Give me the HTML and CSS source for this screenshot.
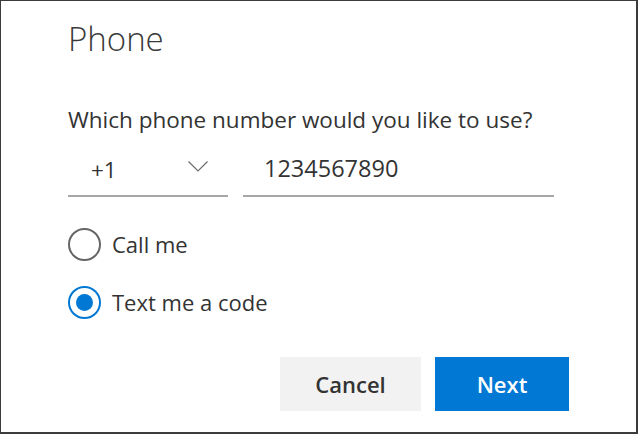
FILE: index.html
```html
<!DOCTYPE html>
<html>
<head>
<meta charset="utf-8">
<link rel="stylesheet" href="styles.css">
</head>
<body>
<div class="dialog">
  <h1 class="title">Phone</h1>
  <p class="question">Which phone number would you like to use?</p>
  <div class="phone-row">
    <div class="select">
      <span class="select-value">+1</span>
      <svg class="chevron" width="20" height="11" viewBox="0 0 20 11"><path d="M0.5 0.5 L10 10 L19.5 0.5" fill="none" stroke="#6b6b6b" stroke-width="1.2"/></svg>
    </div>
    <div class="input">1234567890</div>
  </div>
  <div class="options">
    <label class="option"><span class="radio"></span><span class="option-label">Call me</span></label>
    <label class="option"><span class="radio checked"></span><span class="option-label">Text me a code</span></label>
  </div>
  <div class="actions">
    <button class="btn btn-secondary">Cancel</button>
    <button class="btn btn-primary">Next</button>
  </div>
</div>
</body>
</html>
```
FILE: styles.css
```css
html, body {
  margin: 0;
  padding: 0;
  background: #ffffff;
}
.dialog {
  box-sizing: border-box;
  width: 638px;
  height: 434px;
  border-style: solid;
  border-color: #3b3b3b;
  border-width: 1px 2px 2px 1px;
  padding: 18px 0 0 67px;
  font-family: "Open Sans", "Noto Sans", sans-serif;
  color: #333333;
  display: flex;
  flex-direction: column;
}
.title {
  margin: 0;
  font-size: 33px;
  font-weight: 300;
  line-height: 40px;
  color: #3a3a3a;
}
.question {
  margin: 47px 0 0 0;
  font-size: 22.5px;
  line-height: 28px;
}
.phone-row {
  display: flex;
  gap: 15px;
  margin-top: 14px;
}
.select {
  width: 160px;
  height: 49px;
  box-sizing: border-box;
  border-bottom: 2px solid #a6a6a6;
  display: flex;
  align-items: center;
  justify-content: space-between;
  padding: 0 20px 4px 23px;
  font-size: 22.5px;
}
.chevron {
  display: block;
  margin-bottom: 6px;
}
.input {
  width: 311px;
  height: 49px;
  box-sizing: border-box;
  border-bottom: 2px solid #a6a6a6;
  padding: 6px 0 0 21px;
  font-size: 23.5px;
  line-height: 28px;
}
.options {
  display: flex;
  flex-direction: column;
  gap: 25px;
  margin-top: 31px;
}
.option {
  display: flex;
  align-items: center;
  gap: 11px;
  font-size: 22px;
  line-height: 33px;
}
.radio {
  width: 33px;
  height: 33px;
  box-sizing: border-box;
  border: 2px solid #666666;
  border-radius: 50%;
  display: flex;
  align-items: center;
  justify-content: center;
}
.radio.checked {
  border-color: #0078d4;
}
.radio.checked::after {
  content: "";
  width: 17px;
  height: 17px;
  border-radius: 50%;
  background: #0078d4;
}
.actions {
  display: flex;
  gap: 14px;
  margin: 38px 0 0 212px;
}
.btn {
  height: 54px;
  border: none;
  font-family: "Open Sans", "Noto Sans", sans-serif;
  font-size: 22px;
  font-weight: 600;
  padding: 0;
}
.btn-secondary {
  width: 141px;
  background: #f2f2f2;
  color: #333333;
}
.btn-primary {
  width: 134px;
  background: #0078d4;
  color: #ffffff;
}
```
